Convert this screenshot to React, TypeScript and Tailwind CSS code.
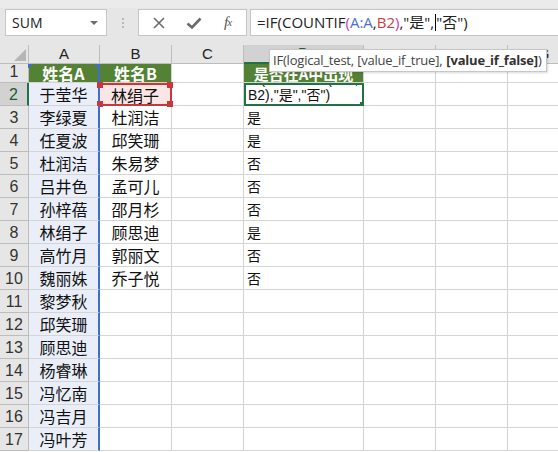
import React from "react";

const colA = ["姓名A","于莹华","李绿夏","任夏波","杜润洁","吕井色","孙梓蓓","林绢子","高竹月","魏丽姝","黎梦秋","邱笑珊","顾思迪","杨睿琳","冯忆南","冯吉月","冯叶芳"];
const colB = ["姓名B","林绢子","杜润洁","邱笑珊","朱易梦","孟可儿","邵月杉","顾思迪","郭丽文","乔子悦"];
const colD = ["是否在A中出现","","是","是","否","否","否","是","否","否"];

const CJK = "font-['Noto_Sans_CJK_SC','Noto_Sans',sans-serif]";

function Corner({ pos }: { pos: string }) {
  return <div className={`absolute w-[6px] h-[6px] bg-[#c8373e] ${pos}`} />;
}

export default function App() {
  const rows = Array.from({ length: 17 }, (_, i) => i + 1);
  const letters = ["A", "B", "C", "D", "E", "F", "G"];
  return (
    <div className={`w-[558px] h-[452px] overflow-hidden bg-white relative ${CJK}`}>
      {/* formula bar */}
      <div className="h-[45px] bg-[#e6e6e6] border-t-[8px] border-[#ebebeb] flex items-start pt-[1px] pl-[5px] font-['Open_Sans',sans-serif]">
        <div className="w-[102px] h-[27px] bg-white border border-[#c6c6c6] flex items-center justify-between pl-[6px] pr-[8px] text-[14px] text-[#222]">
          <span>SUM</span>
          <span className="w-0 h-0 border-l-[4px] border-r-[4px] border-t-[4px] border-l-transparent border-r-transparent border-t-[#6d6d6d]" />
        </div>
        <div className="w-[31px] h-[27px] flex flex-col items-center justify-center gap-[2px]">
          <span className="w-[2px] h-[2px] bg-[#b8b8b8]" />
          <span className="w-[2px] h-[2px] bg-[#b8b8b8]" />
          <span className="w-[2px] h-[2px] bg-[#b8b8b8]" />
        </div>
        <div className="w-[109px] h-[27px] bg-white border border-[#c6c6c6] flex items-center">
          <div className="w-[40px] flex justify-center">
            <svg width="14" height="14" viewBox="0 0 14 14"><path d="M2 2 L12 12 M12 2 L2 12" stroke="#6b6b6b" strokeWidth="1.6" fill="none" /></svg>
          </div>
          <div className="w-[30px] flex justify-center">
            <svg width="16" height="14" viewBox="0 0 16 14"><path d="M1.5 7.5 L6 11.5 L14.5 2.5" stroke="#6b6b6b" strokeWidth="2.6" fill="none" strokeLinejoin="miter" /></svg>
          </div>
          <div className="w-[37px] flex justify-center text-[15px] italic text-[#555] font-['Liberation_Serif',serif] tracking-[-1px]">
            f<span className="text-[11px] mt-[3px]">x</span>
          </div>
        </div>
        <div className="ml-[3px] flex-1 h-[27px] bg-white border border-[#c6c6c6] border-r-0 flex items-center pl-[6px] text-[15px] text-[#222] whitespace-nowrap font-['Open_Sans','Noto_Sans_CJK_SC',sans-serif]">
          <span>=IF(COUNTIF</span>
          <span className="text-[#c13cb0]">(</span>
          <span className="text-[#4a6fd6]">A:A</span>
          <span>,</span>
          <span className="text-[#d23a3a]">B2</span>
          <span className="text-[#c13cb0]">)</span>
          <span>,"是",</span>
          <span className="w-[1px] h-[17px] bg-black mx-[0.5px]" />
          <span>"否")</span>
        </div>
      </div>

      {/* grid */}
      <div className="grid grid-cols-[29px_71px_72px_72px_120px_72px_72px_72px] grid-rows-[19px_19px_repeat(16,23px)]">
        {/* header row */}
        <div className="bg-[#e6e6e6] border-r border-b border-[#bdbdbd] relative">
          <svg className="absolute right-[2px] bottom-[2px]" width="12" height="12" viewBox="0 0 12 12"><path d="M12 0 L12 12 L0 12 Z" fill="#b6b6b6" /></svg>
        </div>
        {letters.map((l) => (
          <div
            key={l}
            className={`flex items-center justify-center text-[15px] font-['Liberation_Sans',sans-serif] border-r border-b ${
              l === "D" ? "bg-[#d2d2d2] border-b-[2px] border-b-[#217346] border-r-[#bdbdbd] text-[#1e5c34]" : "bg-[#e6e6e6] border-[#bdbdbd] text-[#222]"
            }`}
          >
            {l}
          </div>
        ))}

        {rows.map((r) => {
          const a = colA[r - 1];
          const b = colB[r - 1];
          const d = colD[r - 1];
          const isHead = r === 1;
          return (
            <React.Fragment key={r}>
              <div
                className={`flex items-end justify-center text-[16px] leading-[20px] font-['Liberation_Sans',sans-serif] border-b border-r ${
                  r === 2 ? "bg-[#d2d2d2] border-r-[2px] border-r-[#217346] border-b-[#bdbdbd] text-[#1e5c34]" : "bg-[#e6e6e6] border-[#bdbdbd] text-[#333]"
                }`}
              >
                {r}
              </div>
              {/* A */}
              <div
                className={`relative flex items-center justify-center text-[16px] border-b border-r-[2px] border-r-[#3f6fce] ${
                  isHead ? "bg-[#548235] text-white border-b-[#d4d4d4] font-semibold" : "bg-[#e9eef8] text-[#111] border-b-[#d4d4d4]"
                }`}
              >
                {isHead && (
                  <>
                    <span className="absolute -left-[1px] top-0 w-[4px] h-[2px] bg-[#3f6fce]" />
                    <span className="absolute -left-[1px] top-0 w-[2px] h-[4px] bg-[#3f6fce]" />
                    <span className="absolute -right-[2px] top-0 w-[5px] h-[2px] bg-[#3f6fce]" />
                  </>
                )}
                {a}
              </div>
              {/* B */}
              {r === 2 ? (
                <div className="relative flex items-center justify-center text-[16px] text-[#111] bg-[#fbe6e6] border-[2px] border-[#c8373e] border-l-0">
                  <Corner pos="-left-[3px] -top-[3px]" />
                  <Corner pos="-right-[3px] -top-[3px]" />
                  <Corner pos="-left-[3px] -bottom-[3px]" />
                  <Corner pos="-right-[3px] -bottom-[3px]" />
                  {b}
                </div>
              ) : (
                <div
                  className={`flex items-center justify-center text-[16px] border-b border-r border-[#d4d4d4] ${
                    isHead ? "bg-[#548235] text-white font-semibold" : "text-[#111]"
                  }`}
                >
                  {b ?? ""}
                </div>
              )}
              {/* C */}
              <div className="border-b border-r border-[#d4d4d4]" />
              {/* D */}
              {r === 2 ? (
                <div className="relative border-[2px] border-[#217346] overflow-hidden flex flex-col justify-end pl-[2px] pb-[1px] text-[14px] leading-[16px] text-[#111] font-['Liberation_Sans','Noto_Sans_CJK_SC',sans-serif] whitespace-nowrap">
                  <div>IF(COUNTIF(A:A,</div>
                  <div>B2),"是","否")</div>
                  <span className="absolute right-[-2px] bottom-[-2px] w-[5px] h-[5px] bg-[#217346] border border-white" />
                </div>
              ) : (
                <div
                  className={`flex text-[14px] border-b border-r border-[#d4d4d4] ${
                    isHead ? "bg-[#548235] text-white justify-center items-end leading-[16px] font-semibold text-[15px]" : "items-center pl-[3px] text-[#111]"
                  }`}
                >
                  {d ?? ""}
                </div>
              )}
              <div className="border-b border-r border-[#d4d4d4]" />
              <div className="border-b border-r border-[#d4d4d4]" />
              <div className="border-b border-r border-[#d4d4d4]" />
            </React.Fragment>
          );
        })}
      </div>

      {/* tooltip */}
      <div className="absolute left-[269px] top-[49px] w-[278px] h-[23px] bg-white border border-[#c6c6c6] shadow-[1px_1px_2px_rgba(0,0,0,0.15)] flex items-center pl-[3px] text-[13px] text-[#444] whitespace-nowrap font-['Open_Sans',sans-serif] tracking-[-0.2px]">
        IF(logical_test, [value_if_true], <span className="ml-[4px] font-bold text-[#333]">[value_if_false]</span>)
      </div>
    </div>
  );
}
